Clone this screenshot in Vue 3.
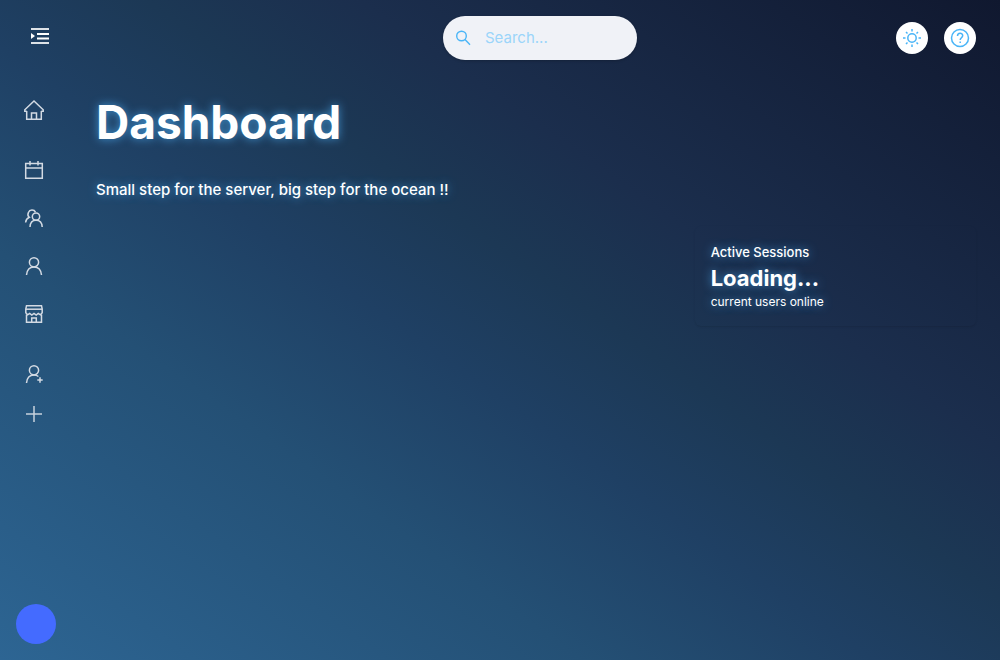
<script setup>
import { ref } from 'vue'

const query = ref('')
const groups = [
  [{ label: 'Home', icon: 'home' }],
  [
    { label: 'Calendar', icon: 'calendar' },
    { label: 'Groups', icon: 'people' },
    { label: 'Profile', icon: 'person' },
    { label: 'Store', icon: 'store' },
  ],
  [{ label: 'Add friend', icon: 'invite' }],
]
const shapes = {
  home: ['M4.700 13v8.300h14.600V13', 'M4.700 13.200H2.800v-1.400L12 3l9.200 8.800v1.400h-1.900', 'M9.500 21v-6h5v6'],
  calendar: ['M3.700 5.500h16.600v14.800H3.700z', 'M3.700 10h16.600', 'M8 3v4.500M16 3v4.500'],
  people: [
    'M3.600 16.500c.3-2.700 1.500-4.300 3.700-5.200-1.500-1.100-1.700-3-.9-4.800 1.300-3.100 5.600-3.300 7.100-.4',
    'M14 6.900a3.700 3.700 0 1 1 0 7.400 3.700 3.700 0 0 1 0-7.400z',
    'M8 21c.2-3.700 2-6.700 6-6.700s6 3 6.200 6.700',
  ],
  person: [
    'M12 3.700a4.600 4.600 0 1 1 0 9.200 4.600 4.600 0 0 1 0-9.200z',
    'M4.500 21c.4-4.700 3-8.100 7.500-8.100s7.100 3.400 7.500 8.100',
  ],
  store: [
    'M4.500 3.700h15l.7 3.300v3.800l-1.700 2-2.200-1.300-2.100 1.600-2.200-1.600-2.200 1.600-2.100-1.600-2.200 1.300-1.700-2V7z',
    'M4.500 12.500v7.800h15v-7.800',
    'M9.700 20v-4h4.600v4',
    'M3.800 7.200h16.400',
  ],
  invite: [
    'M12 3.700a4.600 4.600 0 1 1 0 9.200 4.600 4.600 0 0 1 0-9.200z',
    'M4.500 21c.4-4.700 3-8.100 7.500-8.100 1.800 0 3.300.6 4.400 1.600',
    'M18 15.300v5.400M15.300 18h5.400',
  ],
}
</script>

<template>
  <div class="app">
    <header class="topbar">
      <div class="side start">
        <button class="plain" type="button" aria-label="Expand menu">
          <svg width="24" height="24" viewBox="0 0 24 24" fill="none" stroke="currentColor" stroke-width="2">
            <path d="M3 5h18M3 19h18" opacity=".85" />
            <path d="M9 10h12M9 14.500h12" />
            <path d="m3 9 4 3-4 3z" fill="currentColor" stroke="none" />
          </svg>
        </button>
      </div>
      <label class="search">
        <svg width="20" height="20" viewBox="0 0 20 20" fill="none" stroke="currentColor" stroke-width="1.400">
          <circle cx="8.500" cy="8" r="4.800" />
          <path d="m12 11.500 5 5.300" />
        </svg>
        <input v-model="query" type="text" placeholder="Search..." aria-label="Search" />
      </label>
      <div class="side end">
        <button class="round" type="button" aria-label="Theme">
          <svg width="20" height="20" viewBox="0 0 20 20" fill="none" stroke="currentColor" stroke-width="1.500">
            <circle cx="10" cy="10" r="4.200" />
            <path d="M10 1v2.500M10 16.500V19M1 10h2.500M16.500 10H19M4 4l1.500 1.500M14.500 14.500 16 16M4 16l1.500-1.500M14.500 5.500 16 4" />
          </svg>
        </button>
        <button class="round" type="button" aria-label="Help">
          <svg width="20" height="20" viewBox="0 0 20 20" fill="none" stroke="currentColor" stroke-width="1.500">
            <circle cx="10" cy="10" r="8.500" />
            <path d="M7.500 8c0-3.500 5.200-3.500 5.200-.4 0 2.100-2.500 2.300-2.500 4.400" />
            <path d="M10.200 13.500V15" />
          </svg>
        </button>
      </div>
    </header>

    <div class="body">
      <nav class="rail" aria-label="Main">
        <div v-for="(group, i) in groups" :key="i" class="group">
          <a v-for="item in group" :key="item.icon" href="#" :aria-label="item.label">
            <svg width="24" height="24" viewBox="0 0 24 24" fill="none" stroke="currentColor" stroke-width="1.500">
              <path v-for="d in shapes[item.icon]" :key="d" :d="d" />
            </svg>
          </a>
        </div>
        <button class="plain add" type="button" aria-label="Add">
          <svg width="24" height="24" viewBox="0 0 24 24" fill="none" stroke="currentColor" stroke-width="1.500">
            <path d="M4 12h16M12 4v16" />
          </svg>
        </button>
        <button class="avatar" type="button" aria-label="Account"></button>
      </nav>

      <main>
        <h1>Dashboard</h1>
        <p class="lead">Small step for the server, big step for the ocean !!</p>
        <section class="stats">
          <article class="card">
            <h2>Active Sessions</h2>
            <p class="value">Loading...</p>
            <p class="note">current users online</p>
          </article>
        </section>
      </main>
    </div>
  </div>
</template>

<style>
body {
  margin: 0;
}
</style>

<style scoped>
.app {
  min-height: 100vh;
  box-sizing: border-box;
  display: flex;
  flex-direction: column;
  font-family: Inter, "Liberation Sans", sans-serif;
  color: #fff;
  background: linear-gradient(215deg, #10182f 0%, #1b2e4d 33%, #1c3855 44%, #1f4064 55%, #245075 70%, #2d6593 100%);
}
h1, h2, p {
  margin: 0;
}
svg {
  display: block;
}
button {
  border: 0;
  padding: 0;
  cursor: pointer;
}
.plain {
  background: none;
  color: #fff;
}
.topbar {
  display: flex;
  align-items: center;
  padding: 16px 24px 16px 28px;
}
.side {
  flex: 1;
  display: flex;
  gap: 16px;
}
.start {
  padding-bottom: 4px;
}
.end {
  justify-content: flex-end;
}
.search {
  width: 194px;
  height: 44px;
  box-sizing: border-box;
  display: flex;
  align-items: center;
  gap: 12px;
  padding: 0 16px 0 10px;
  margin-left: 76px;
  border-radius: 22px;
  background: #f0f2f7;
  color: #4ab5f7;
  box-shadow: 0 1px 3px #0003;
}
.search svg {
  flex: none;
}
.search input {
  flex: 1;
  min-width: 0;
  border: 0;
  padding: 0;
  outline: 0;
  background: none;
  color: #4ab5f7;
  font: 15px/24px Inter, "Liberation Sans", sans-serif;
}
.search input::placeholder {
  color: #9bd5fa;
  opacity: 1;
}
.round {
  width: 32px;
  height: 32px;
  display: grid;
  place-items: center;
  border-radius: 50%;
  background: #fff;
  color: #4ab5f7;
}
.body {
  flex: 1;
  display: flex;
}
.rail {
  width: 72px;
  flex: none;
  box-sizing: border-box;
  display: flex;
  flex-direction: column;
  align-items: flex-start;
  padding: 22px 16px 16px;
}
.group {
  display: flex;
  flex-direction: column;
  gap: 24px;
  padding-left: 6px;
  margin-bottom: 36px;
}
.rail a {
  color: #d3dae3;
}
.add {
  margin: -20px 6px 0;
  color: #c8d2dd;
}
.avatar {
  width: 40px;
  height: 40px;
  margin-top: auto;
  border-radius: 50%;
  background: #446bff;
}
main {
  flex: 1;
  padding: 16px 24px;
  text-shadow: 0 0 10px #4aa8ecd0;
}
h1 {
  font-size: 46px;
  line-height: 60px;
  font-weight: 700;
}
.lead {
  margin-top: 26px;
  font-size: 15px;
  line-height: 24px;
  font-weight: 500;
}
.stats {
  display: grid;
  grid-template-columns: repeat(3, 1fr);
  gap: 18px;
  margin-top: 24px;
}
.card {
  grid-column: 3;
  padding: 16px;
  border-radius: 6px;
  box-shadow: 0 1px 2px #0000001a;
}
h2 {
  font-size: 13px;
  line-height: 20px;
  font-weight: 500;
}
.value {
  font-size: 22px;
  line-height: 32px;
  font-weight: 700;
}
.note {
  font-size: 12px;
  line-height: 16px;
}
</style>
